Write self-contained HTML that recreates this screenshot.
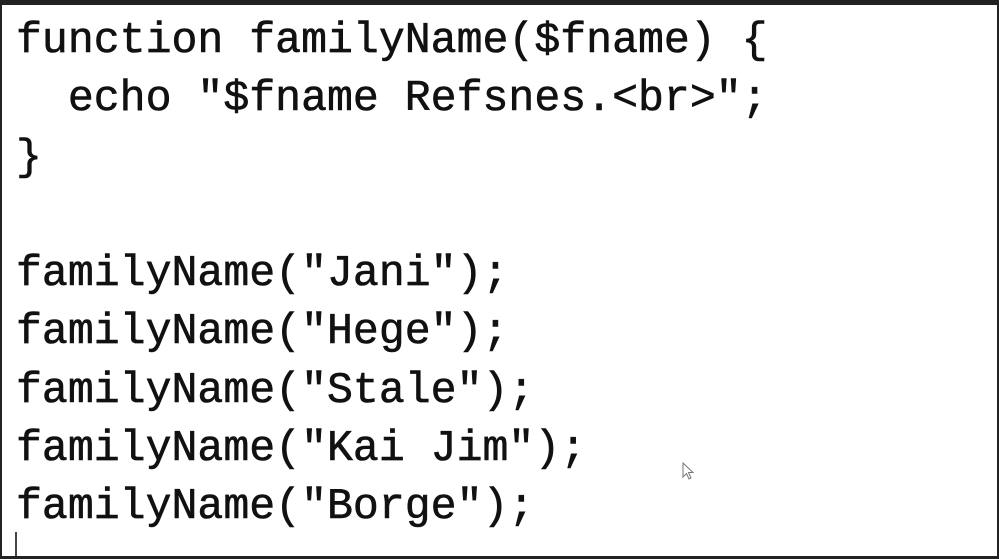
<!DOCTYPE html>
<html><head><style>
html,body{margin:0;padding:0;}
body{width:999px;height:559px;background:#222;position:relative;overflow:hidden;}
.pane{position:absolute;left:2px;top:5px;width:995px;height:551px;background:#fff;overflow:hidden;}
pre{margin:0;position:absolute;left:14px;top:7px;font-family:"Liberation Mono",monospace;font-size:43.2px;line-height:58.3px;color:#111;-webkit-text-stroke:0.6px #111;}
.caret{position:absolute;left:13px;top:527px;width:2px;height:24px;background:#444;}
</style></head><body>
<div class="pane">
<pre>function familyName($fname) {
  echo "$fname Refsnes.&lt;br&gt;";
}

familyName("Jani");
familyName("Hege");
familyName("Stale");
familyName("Kai Jim");
familyName("Borge");</pre>
<div class="caret"></div>
<svg style="position:absolute;left:680px;top:457px" width="14" height="20" viewBox="0 0 14 20"><path d="M1 1 L1 15 L4.5 11.5 L7 17 L9 16 L6.5 10.5 L11 10.5 Z" fill="#fff" stroke="#777" stroke-width="1"/></svg>
</div>
</body></html>
